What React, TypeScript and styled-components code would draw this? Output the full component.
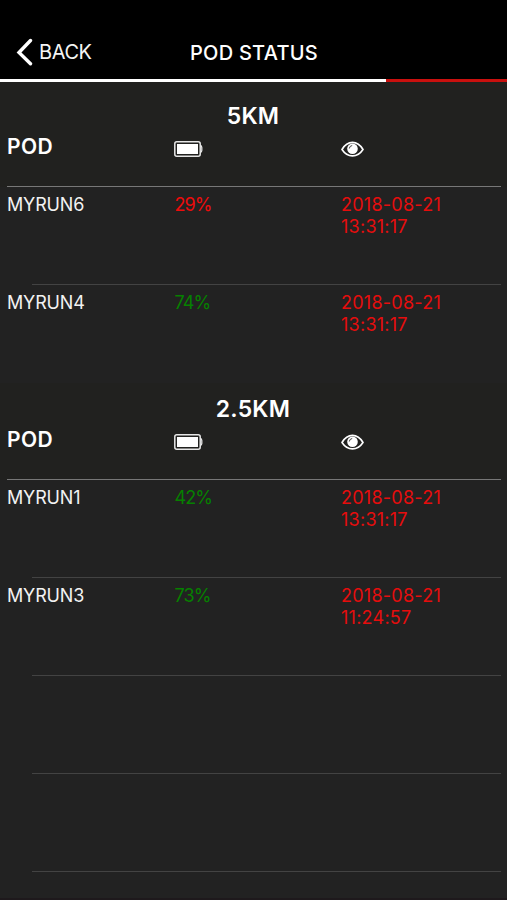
import React from "react";
import styled, { createGlobalStyle } from "styled-components";

const Global = createGlobalStyle`
  * { box-sizing: border-box; }
  body { margin: 0; background: #222; font-family: Inter, "Liberation Sans", sans-serif; }
`;
const Screen = styled.main`
  width: 507px; height: 900px; overflow: hidden;
  background: #222; color: #fff;
  display: flex; flex-direction: column;
  border-bottom: 2px solid #1e191c;
`;
const Header = styled.header`
  height: 79px; flex: none; background: #000;
  display: grid; grid-template-columns: 1fr 129px 1fr;
  padding-top: 38px; align-items: start;
  line-height: 26px; font-size: 20px;
`;
const Back = styled.button`
  display: flex; align-items: center; gap: 6px; margin: 0; padding: 0 0 0 16px;
  border: 0; background: none; color: #f4f4f4; font: inherit; letter-spacing: -0.4px;
`;
const Title = styled.h1`
  margin: 0; padding: 1px 0 0 1px; font-size: 20px; font-weight: 500;
  white-space: nowrap; letter-spacing: 0.25px; line-height: 28px;
`;
const Progress = styled.div`
  height: 3px; flex: none; background: linear-gradient(90deg, #fff 386px, #c9100e 386px);
`;
const Section = styled.section`
  flex: none;
`;
const SectionHead = styled.div<{ $h: number }>`
  height: ${(p) => p.$h}px; padding: 0 6px 0 7px; background: #21211f;
  display: flex; flex-direction: column; justify-content: flex-end;
`;
const Distance = styled.h2`
  margin: 0; height: 28px; line-height: 28px; font-size: 23px; font-weight: 600;
  text-align: center; padding-right: 2px; letter-spacing: 0.2px;
`;
const Columns = styled.div`
  display: grid; grid-template-columns: 167px 167px 1fr;
`;
const HeadColumns = styled(Columns)`
  height: 57px; border-bottom: 1px solid #777; align-items: start;
`;
const PodLabel = styled.div`
  font-size: 21px; line-height: 34px; font-weight: 600; letter-spacing: 0.4px;
`;
const IconCell = styled.div`
  height: 38px; display: flex; align-items: center;
`;
const Row = styled(Columns)`
  height: 98px; flex: none; padding: 7px 6px 0 7px;
  font-size: 18px; line-height: 22px; color: #f2f2f2;
`;
const Divider = styled.div`
  height: 1px; flex: none; margin: -1px 6px 0 32px; background: #434343;
`;
const Name = styled.span`
  letter-spacing: -0.15px;
`;
const Charge = styled.span<{ $color: string }>`
  color: ${(p) => p.$color}; letter-spacing: -0.9px; padding-left: 0.5px;
`;
const Seen = styled.span`
  color: #e60d0d; white-space: pre-line; letter-spacing: 0.25px;
`;

const Battery = () => (
  <svg width="29" height="18" viewBox="0 0 29 18">
    <rect x=".8" y="1.800" width="25.400" height="14.400" rx="2" fill="none" stroke="#e6e6e6" strokeWidth="1.500" />
    <rect x="3" y="4" width="21" height="10" fill="#fff" />
    <path d="M26 5.500q1.800.3 1.800 2v3q0 1.700-1.800 2" fill="none" stroke="#e6e6e6" strokeWidth="1.300" />
  </svg>
);
const Eye = () => (
  <svg width="23" height="18" viewBox="0 0 23 18">
    <path d="M1 9.500C6.500 0 16.500 0 22 9.500 16.500 18 6.500 18 1 9.500Z" fill="none" stroke="#fff" strokeWidth="1.600" />
    <circle cx="11.500" cy="8.800" r="5.300" fill="#fff" />
    <path d="M8.300 8.500q.2-2.600 2.900-3" fill="none" stroke="#444" strokeWidth="1" />
  </svg>
);

const RED = "#ee0c0c";
const GREEN = "#068000";
const groups = [
  { name: "5KM", head: 105, pods: [
    { id: "MYRUN6", battery: "29%", color: RED, seen: "2018-08-21\n13:31:17" },
    { id: "MYRUN4", battery: "74%", color: GREEN, seen: "2018-08-21\n13:31:17" },
  ] },
  { name: "2.5KM", head: 97, pods: [
    { id: "MYRUN1", battery: "42%", color: GREEN, seen: "2018-08-21\n13:31:17" },
    { id: "MYRUN3", battery: "73%", color: GREEN, seen: "2018-08-21\n11:24:57" },
  ] },
];
const emptyRows = [0, 1, 2];

export default function App() {
  return (
    <Screen>
      <Global />
      <Header>
        <Back>
          <svg width="17" height="28" viewBox="0 0 17 28"><path d="M14.500 2.500 3 14.500l11.500 11.200" fill="none" stroke="#fff" strokeWidth="3.400" strokeLinecap="round" /></svg>
          BACK
        </Back>
        <Title>POD STATUS</Title>
      </Header>
      <Progress />
      {groups.map((g) => (
        <Section key={g.name}>
          <SectionHead $h={g.head}>
            <Distance>{g.name}</Distance>
            <HeadColumns>
              <PodLabel>POD</PodLabel>
              <IconCell><Battery /></IconCell>
              <IconCell><Eye /></IconCell>
            </HeadColumns>
          </SectionHead>
          {g.pods.map((p, i) => (
            <React.Fragment key={p.id}>
              {i > 0 && <Divider />}
              <Row>
                <Name>{p.id}</Name>
                <Charge $color={p.color}>{p.battery}</Charge>
                <Seen>{p.seen}</Seen>
              </Row>
            </React.Fragment>
          ))}
        </Section>
      ))}
      {emptyRows.map((n) => (
        <React.Fragment key={n}>
          <Divider />
          <Row />
        </React.Fragment>
      ))}
    </Screen>
  );
}
